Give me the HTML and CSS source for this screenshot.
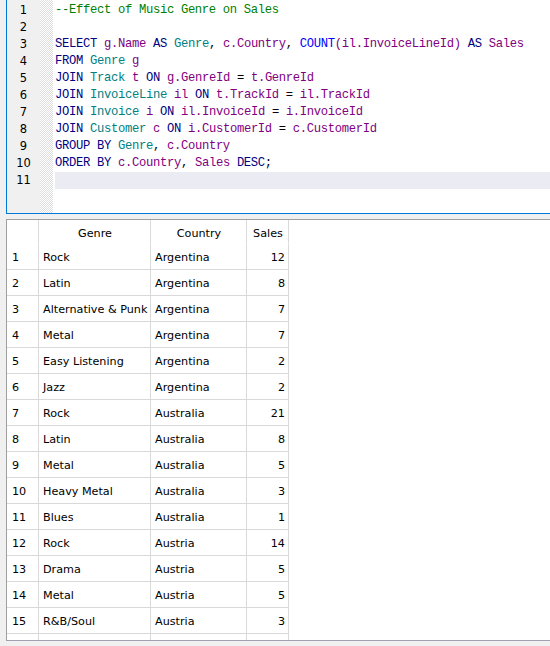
FILE: index.html
```html
<!DOCTYPE html>
<html>
<head>
<meta charset="utf-8">
<link rel="stylesheet" href="styles.css">
</head>
<body>
<div class="editor">
  <div class="gutter">
    <div class="ln">1</div><div class="ln">2</div><div class="ln">3</div><div class="ln">4</div><div class="ln">5</div><div class="ln">6</div><div class="ln">7</div><div class="ln">8</div><div class="ln">9</div><div class="ln">10</div><div class="ln">11</div>
  </div>
  <div class="fold"></div>
  <div class="code">
    <div class="line"><span class="cm">--Effect of Music Genre on Sales</span></div>
    <div class="line"></div>
    <div class="line"><span class="kw">SELECT</span> <span class="id">g.Name</span> <span class="kw">AS</span> <span class="tb">Genre</span>, <span class="id">c.Country</span>, <span class="fn">COUNT</span><span class="id">(il.InvoiceLineId)</span> <span class="kw">AS</span> <span class="id">Sales</span></div>
    <div class="line"><span class="kw">FROM</span> <span class="tb">Genre</span> <span class="id">g</span></div>
    <div class="line"><span class="kw">JOIN</span> <span class="tb">Track</span> <span class="id">t</span> <span class="kw">ON</span> <span class="id">g.GenreId</span> = <span class="id">t.GenreId</span></div>
    <div class="line"><span class="kw">JOIN</span> <span class="tb">InvoiceLine</span> <span class="id">il</span> <span class="kw">ON</span> <span class="id">t.TrackId</span> = <span class="id">il.TrackId</span></div>
    <div class="line"><span class="kw">JOIN</span> <span class="tb">Invoice</span> <span class="id">i</span> <span class="kw">ON</span> <span class="id">il.InvoiceId</span> = <span class="id">i.InvoiceId</span></div>
    <div class="line"><span class="kw">JOIN</span> <span class="tb">Customer</span> <span class="id">c</span> <span class="kw">ON</span> <span class="id">i.CustomerId</span> = <span class="id">c.CustomerId</span></div>
    <div class="line"><span class="kw">GROUP BY</span> <span class="tb">Genre</span>, <span class="id">c.Country</span></div>
    <div class="line"><span class="kw">ORDER BY</span> <span class="id">c.Country</span>, <span class="id">Sales</span> <span class="kw">DESC</span>;</div>
    <div class="line current"></div>
  </div>
</div>
<div class="splitter"></div>
<div class="results">
  <div class="grid">
    <div class="c hd rn"></div><div class="c hd">Genre</div><div class="c hd">Country</div><div class="c hd">Sales</div>
    <div class="c rn">1</div><div class="c">Rock</div><div class="c">Argentina</div><div class="c num">12</div>
    <div class="c rn">2</div><div class="c">Latin</div><div class="c">Argentina</div><div class="c num">8</div>
    <div class="c rn">3</div><div class="c">Alternative &amp; Punk</div><div class="c">Argentina</div><div class="c num">7</div>
    <div class="c rn">4</div><div class="c">Metal</div><div class="c">Argentina</div><div class="c num">7</div>
    <div class="c rn">5</div><div class="c">Easy Listening</div><div class="c">Argentina</div><div class="c num">2</div>
    <div class="c rn">6</div><div class="c">Jazz</div><div class="c">Argentina</div><div class="c num">2</div>
    <div class="c rn">7</div><div class="c">Rock</div><div class="c">Australia</div><div class="c num">21</div>
    <div class="c rn">8</div><div class="c">Latin</div><div class="c">Australia</div><div class="c num">8</div>
    <div class="c rn">9</div><div class="c">Metal</div><div class="c">Australia</div><div class="c num">5</div>
    <div class="c rn">10</div><div class="c">Heavy Metal</div><div class="c">Australia</div><div class="c num">3</div>
    <div class="c rn">11</div><div class="c">Blues</div><div class="c">Australia</div><div class="c num">1</div>
    <div class="c rn">12</div><div class="c">Rock</div><div class="c">Austria</div><div class="c num">14</div>
    <div class="c rn">13</div><div class="c">Drama</div><div class="c">Austria</div><div class="c num">5</div>
    <div class="c rn">14</div><div class="c">Metal</div><div class="c">Austria</div><div class="c num">5</div>
    <div class="c rn">15</div><div class="c">R&amp;B/Soul</div><div class="c">Austria</div><div class="c num">3</div>
    <div class="c rn"></div><div class="c"></div><div class="c"></div><div class="c num"></div>
  </div>
</div>
</body>
</html>
```
FILE: styles.css
```css
html, body {
  margin: 0;
  padding: 0;
}
body {
  width: 550px;
  height: 646px;
  overflow: hidden;
  background: #f0f0f0;
}
.editor {
  margin-left: 6px;
  height: 213px;
  border-left: 1px solid #0078d7;
  border-bottom: 1px solid #0078d7;
  display: flex;
  background: #fff;
}
.gutter {
  width: 33px;
  background: #f0f0f0;
  padding-top: 2px;
  font-family: "DejaVu Sans", sans-serif;
  font-size: 11.5px;
  color: #000;
}
.ln {
  height: 17px;
  line-height: 17px;
  text-align: center;
}
.fold {
  width: 13px;
  background: repeating-conic-gradient(#dedede 0 25%, #fff 0 50%) 0 0 / 2px 2px;
}
.code {
  flex: 1;
  padding-top: 2px;
  margin-left: 2px;
  font-family: "Liberation Mono", monospace;
  font-size: 12.2px;
  letter-spacing: -0.32px;
  color: #000;
}
.line {
  height: 17px;
  line-height: 17px;
  white-space: pre;
}
.line.current {
  background: #ebebf3;
}
.cm { color: #008000; }
.kw { color: #000080; }
.fn { color: #0000ff; }
.tb { color: #008080; }
.id { color: #800080; }
.splitter {
  height: 5px;
}
.results {
  margin-left: 6px;
  height: 420px;
  border-top: 1px solid #a0a0a0;
  border-left: 1px solid #a0a0a0;
  border-bottom: 1px solid #a0a0b0;
  background: #fff;
  overflow: hidden;
}
.grid {
  display: grid;
  grid-template-columns: 32px 112px 96px 42px;
  grid-template-rows: 24px repeat(16, 26px);
  font-family: "DejaVu Sans", sans-serif;
  font-size: 11.2px;
  color: #000;
}
.c {
  box-sizing: border-box;
  border-right: 1px solid #d9d9d9;
  border-bottom: 1px solid #d9d9d9;
  padding: 2px 3px 0 4px;
  display: flex;
  align-items: center;
  white-space: nowrap;
  overflow: hidden;
}
.hd {
  justify-content: center;
  border-bottom-color: #fff;
  padding-top: 3px;
}
.rn {
  padding-left: 5px;
}
.num {
  justify-content: flex-end;
}
```
